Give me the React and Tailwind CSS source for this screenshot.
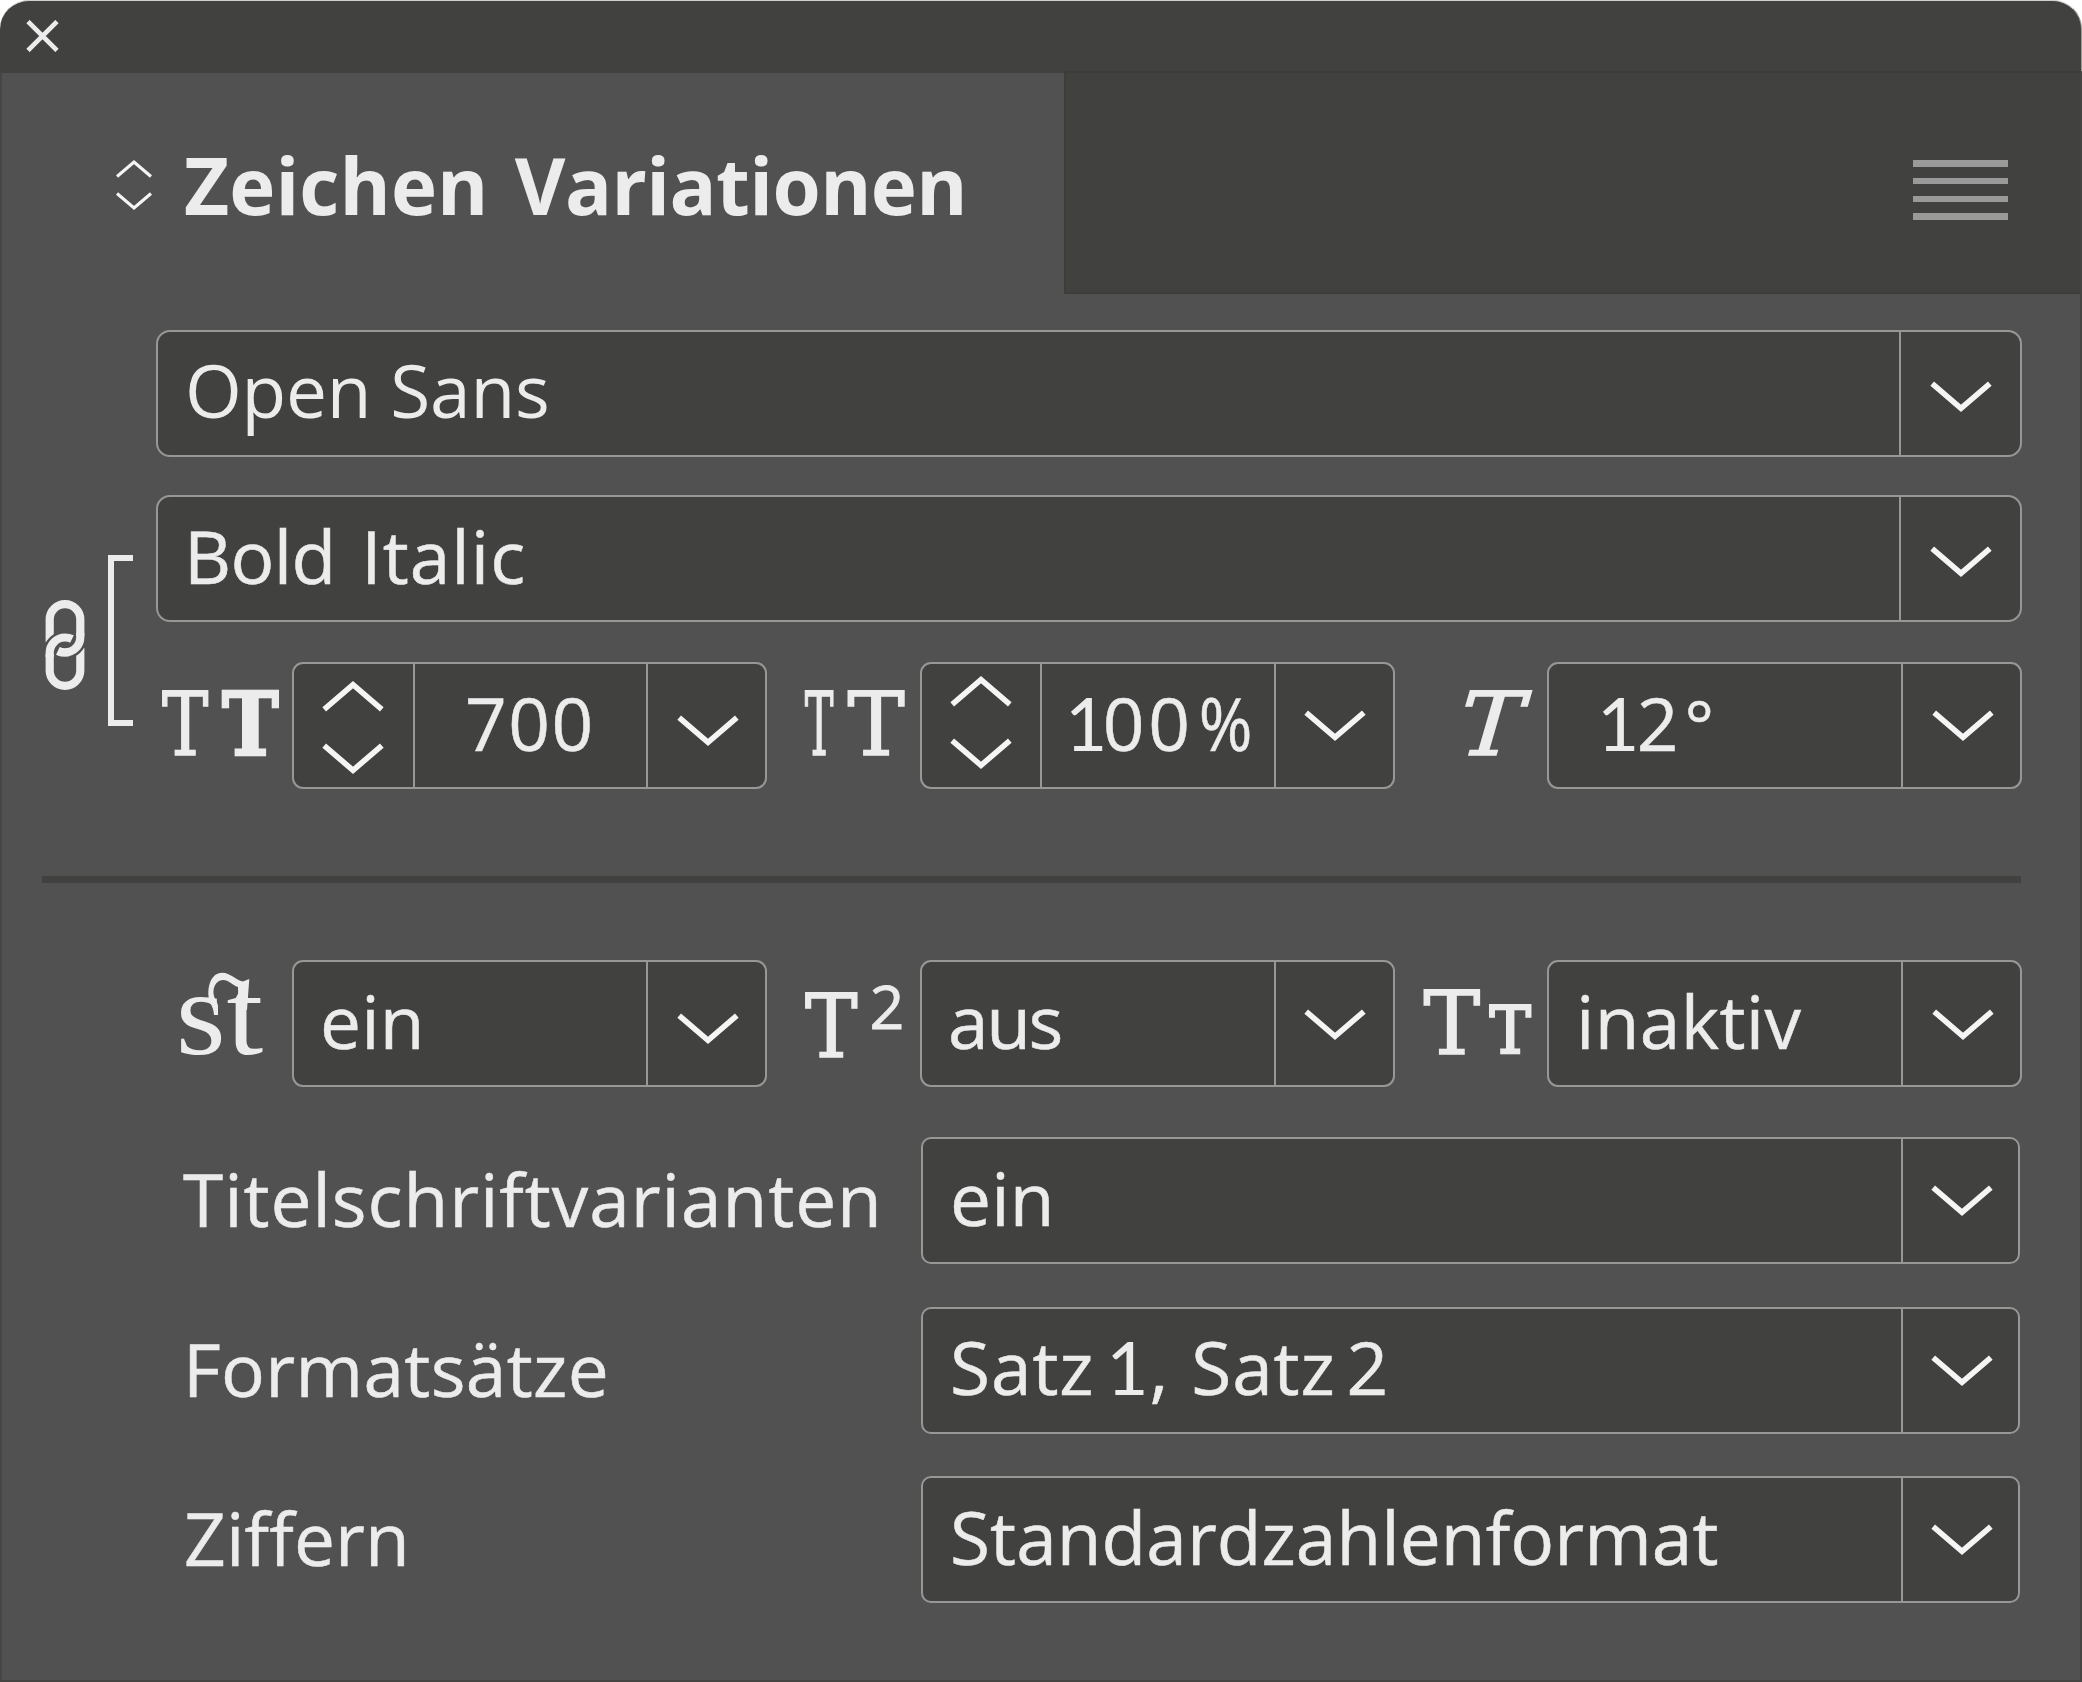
import React from "react";

const SERIF = "'DejaVu Serif', serif";

function Chevron({ up = false }) {
  return (
    <svg width="62" height="32" viewBox="0 0 62 32" className={up ? "shrink-0 rotate-180" : "shrink-0"}>
      <path d="M2.2 2.6 31 27.3 59.8 2.6" fill="none" stroke="#f5f5f5" strokeWidth="5.6" />
    </svg>
  );
}

function Field({ className, textClass, cell, spinner, children }) {
  return (
    <div className={`flex h-[127px] shrink-0 border-2 border-[#979796] bg-[#41413f] ${className}`}>
      {spinner && (
        <div className={`flex shrink-0 flex-col items-center justify-center gap-[31px] border-r-2 border-[#979796] ${spinner}`}>
          <Chevron up />
          <Chevron />
        </div>
      )}
      <div className={`flex min-w-0 flex-1 items-center pb-[6px] whitespace-pre ${textClass}`}>
        <span>{children}</span>
      </div>
      <div className={`flex shrink-0 items-center justify-center border-l-2 border-[#979796] ${cell}`}>
        <Chevron />
      </div>
    </div>
  );
}

function One({ className = "" }) {
  return <span className={`font-['Lato'] leading-none [-webkit-text-stroke:0] ${className}`}>1</span>;
}

function Icon({ width, children }) {
  return (
    <svg
      width={width}
      height="127"
      viewBox={`0 0 ${width} 127`}
      className="shrink-0 overflow-visible"
      fill="#ececec"
      fontFamily={SERIF}
    >
      {children}
    </svg>
  );
}

function WeightIcon() {
  return (
    <Icon width={136}>
      <text fontSize="88" stroke="#ececec" strokeWidth="1.6" transform="translate(6 93.2) scale(.79 1)">T</text>
      <text fontSize="87" fontWeight="700" stroke="#ececec" strokeWidth="2.6" transform="translate(66 92.7) scale(.875 1)">T</text>
    </Icon>
  );
}

function WidthIcon() {
  return (
    <Icon width={153}>
      <text fontSize="88" stroke="#ececec" strokeWidth="1.6" transform="translate(37.8 93.2) scale(.49 1)">T</text>
      <text fontSize="88" stroke="#ececec" strokeWidth="1.6" transform="translate(80.5 93.2) scale(.975 1)">T</text>
    </Icon>
  );
}

function SlantIcon() {
  return (
    <Icon width={152}>
      <text fontSize="88" stroke="#ececec" strokeWidth="1.6" transform="matrix(1.07 0 -.29 1 56 93.2)">T</text>
    </Icon>
  );
}

function LigatureIcon() {
  return (
    <Icon width={136}>
      <g fontFamily="'Liberation Serif', serif" fontSize="120">
        <text transform="translate(19.7 94) scale(1.07 1)">s</text>
        <text transform="translate(70.5 94) scale(1.1 1)">t</text>
      </g>
      <path d="M53.5 41C50 28 55 12.7 66 12.7C75 12.7 79 20 87 21.5L93.3 19L91 50H82.500L82 27C76 25 73 20 67 20C59 20 56 30 58 36C59 40 62 43 62 46V55H58L57 47Z" />
    </Icon>
  );
}

function SuperscriptIcon() {
  return (
    <Icon width={153}>
      <text fontSize="88" stroke="#ececec" strokeWidth="1.6" transform="translate(38 97.2) scale(.895 1)">T</text>
      <text fontSize="61" fontFamily="'Open Sans', sans-serif" x="102.5" y="69" stroke="#ececec" strokeWidth=".8">2</text>
    </Icon>
  );
}

function SmallCapsIcon() {
  return (
    <Icon width={152}>
      <text fontSize="88" stroke="#ececec" strokeWidth="1.6" transform="translate(28.5 94.2) scale(.965 1)">T</text>
      <text fontSize="66" stroke="#ececec" strokeWidth="2.4" transform="translate(94.5 92.8) scale(.94 1)">T</text>
    </Icon>
  );
}

function LinkIcon() {
  return (
    <svg width="40" height="92" viewBox="44.5 599 40 92" fill="none" stroke="#ececec" strokeWidth="8.2" className="shrink-0">
      <path d="M49.2 642V619.500a15.300 15.300 0 0 1 30.600 0V637A15.300 15.300 0 0 1 64.500 652.500Q60.500 652.500 57.500 651" />
      <path d="M79.800 648V670.500a15.300 15.300 0 0 1 -30.600 0V653" />
      <path d="M49.2 654A15.300 15.300 0 0 1 61 638" stroke="#515151" strokeWidth="13" />
      <path d="M79.800 636A15.300 15.300 0 0 1 68 652" stroke="#515151" strokeWidth="13" />
      <path d="M79.800 633V637A15.300 15.300 0 0 1 64.500 652.500Q60.500 652.500 57.500 651" />
      <path d="M49.2 657V653A15.300 15.300 0 0 1 64.500 637.500Q68.500 637.500 71.500 639" />
    </svg>
  );
}

export default function App() {
  return (
    <div className="flex h-[1682px] w-[2082px] flex-col overflow-hidden bg-white font-['Open_Sans',sans-serif] text-[73px] leading-none text-[#ececec]">
      <header className="flex h-[71px] shrink-0 items-center rounded-t-[29px] border-t border-r border-t-[#cfd3cb] border-r-[#9a9a97] bg-[#41413f] pl-[26px]">
        <svg width="33" height="32" viewBox="0 0 33 32">
          <path d="M2 1.500 31 30.500M31 1.500 2 30.500" stroke="#ececec" strokeWidth="4.6" />
        </svg>
      </header>

      <main className="flex flex-1 flex-col border-x-2 border-b-2 border-[#454543] bg-[#515151]">
        <div className="flex h-[223px] shrink-0">
          <div className="flex w-[1062px] shrink-0 items-center border-t-2 border-[#41413f] pl-[114px]">
            <svg width="36" height="52" viewBox="0 0 36 52" fill="none" stroke="#f5f5f5" strokeWidth="3.2" className="mt-[2px] shrink-0">
              <path d="M1 17.500 18 3 35 17.500M1 34.500 18 49 35 34.500" />
            </svg>
            <h1 className="ml-[32px] pt-[2px] text-[78px] leading-none font-bold tracking-[0.1px] whitespace-nowrap">
              Zeichen <span className="ml-[6px] tracking-[-0.6px]">Variationen</span>
            </h1>
          </div>
          <div className="flex flex-1 items-start justify-end border-y-2 border-l-2 border-[#3d3d3a] bg-[#41413f] pt-[87px] pr-[72px]">
            <div className="flex h-[60px] w-[95px] flex-col justify-between">
              <span className="h-[7px] bg-[#9a9a9a]" />
              <span className="h-[6px] bg-[#9a9a9a]" />
              <span className="h-[6px] bg-[#9a9a9a]" />
              <span className="h-[7px] bg-[#9a9a9a]" />
            </div>
          </div>
        </div>

        <Field className="mt-[36px] ml-[154px] w-[1866px] rounded-[14px]" textClass="pl-[27px] pb-[8px] tracking-[-0.19px]" cell="w-[121px] pt-[7px]">
          Open Sans
        </Field>

        <section className="mt-[38px] flex">
          <div className="flex w-[154px] shrink-0 items-start pl-[42.5px]">
            <div className="mt-[104px] flex">
              <LinkIcon />
            </div>
            <div className="mt-[60px] ml-[23.5px] h-[171px] w-[25px] border-y-[6px] border-l-[6px] border-[#ececec]" />
          </div>
          <div className="flex flex-col gap-[40px]">
            <Field className="w-[1866px] rounded-[14px]" textClass="pl-[26px] tracking-[1px] [-webkit-text-stroke:0.5px]" cell="w-[121px] pt-[6px]">
              <span className="tracking-[-0.7px]">Bold</span> <span className="ml-[6px]">Italic</span>
            </Field>
            <div className="flex">
              <WeightIcon />
              <Field className="w-[475px] rounded-[11px]" spinner="w-[121px] pt-[3px] pr-[2px]" textClass="pl-[50px] tracking-[1.5px] [-webkit-text-stroke:0.5px]" cell="w-[119px] pt-[10px] pl-[2px]">
                700
              </Field>
              <WidthIcon />
              <Field className="w-[475px] rounded-[11px]" spinner="w-[120px] pb-[6px]" textClass="pl-[23px] tracking-[3.7px] [-webkit-text-stroke:0.5px]" cell="w-[119px] pt-[1px]">
                <One className="tracking-[-4.6px]" />00<span className="inline-block origin-right scale-x-[.89] -ml-[2px] tracking-[0px]">%</span>
              </Field>
              <SlantIcon />
              <Field className="w-[475px] rounded-[11px]" textClass="pl-[48px] [-webkit-text-stroke:0.5px]" cell="w-[119px] pt-[1px] pl-[2px]">
                <One className="tracking-[-2.6px]" />
                <span className="tracking-[6px]">2</span>
                <span className="text-[69px] leading-none">°</span>
              </Field>
            </div>
          </div>
        </section>

        <hr className="mt-[87px] ml-[40px] h-[7px] w-[1979px] shrink-0 border-0 bg-[#41413f]" />

        <div className="mt-[77px] ml-[154px] flex">
          <LigatureIcon />
          <Field className="w-[475px] rounded-[11px]" textClass="pl-[26px] tracking-[0.2px] [-webkit-text-stroke:0.5px]" cell="w-[119px] pt-[11px] pl-[2px]">
            ein
          </Field>
          <SuperscriptIcon />
          <Field className="w-[475px] rounded-[11px]" textClass="pl-[26px] tracking-[-2.4px] [-webkit-text-stroke:0.5px]" cell="w-[119px] pt-[2px]">
            aus
          </Field>
          <SmallCapsIcon />
          <Field className="w-[475px] rounded-[11px]" textClass="pl-[27px] tracking-[0.32px] [-webkit-text-stroke:0.5px]" cell="w-[119px] pt-[2px] pl-[2px]">
            inaktiv
          </Field>
        </div>

        <div className="mt-[50px] ml-[154px] flex items-center">
          <span className="w-[765px] pb-[4px] pl-[27px] tracking-[0.95px] [-webkit-text-stroke:0.5px]">Titelschriftvarianten</span>
          <Field className="w-[1099px] rounded-[10px]" textClass="pl-[27px] tracking-[0.2px] [-webkit-text-stroke:0.5px]" cell="w-[117px] pl-[3px]">
            ein
          </Field>
        </div>
        <div className="mt-[43px] ml-[154px] flex items-center">
          <span className="w-[765px] pb-[4px] pl-[27px] tracking-[0.35px] [-webkit-text-stroke:0.5px]">Formatsätze</span>
          <Field className="w-[1099px] rounded-[10px]" textClass="pl-[27px] pb-[8px] tracking-[0.9px] [-webkit-text-stroke:0.5px]" cell="w-[117px] pl-[3px]">
            Satz <One className="-ml-[8px]" />, <span className="ml-[2px]">Satz </span><span className="-ml-[9px]">2</span>
          </Field>
        </div>
        <div className="mt-[42px] ml-[154px] flex items-center">
          <span className="w-[765px] pb-[4px] pl-[28px] tracking-[0.14px] [-webkit-text-stroke:0.5px]">Ziffern</span>
          <Field className="w-[1099px] rounded-[10px]" textClass="pl-[27px] tracking-[0.06px] [-webkit-text-stroke:0.5px]" cell="w-[117px] pl-[3px]">
            Standardzahlenformat
          </Field>
        </div>
      </main>
    </div>
  );
}
